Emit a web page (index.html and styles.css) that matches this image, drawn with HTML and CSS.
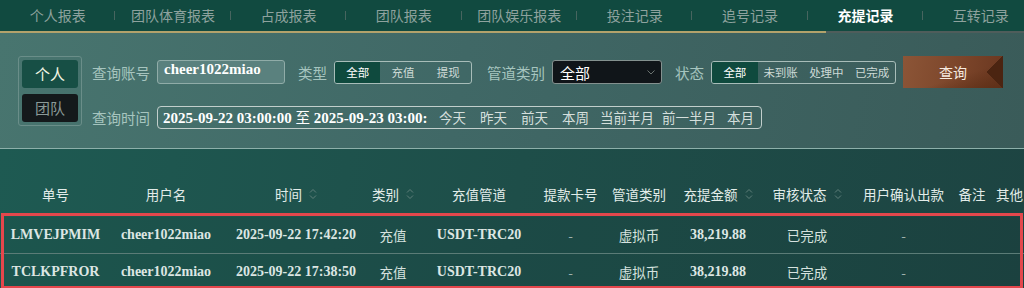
FILE: index.html
```html
<!DOCTYPE html>
<html lang="zh-CN">
  <head>
    <meta charset="UTF-8" />
    <title>充提记录</title>
    <link rel="stylesheet" href="styles.css">
  </head>
  <body>
    <div class="tabs">
      <span class="tab">个人报表</span>
      <span class="tab">团队体育报表</span>
      <span class="tab">占成报表</span>
      <span class="tab">团队报表</span>
      <span class="tab">团队娱乐报表</span>
      <span class="tab">投注记录</span>
      <span class="tab">追号记录</span>
      <span class="tab active">充提记录</span>
      <span class="tab">互转记录</span>
    </div>
    <div class="tab-line"></div>

    <div class="filters">
      <div class="who">
        <span class="who-btn on">个人</span>
        <span class="who-btn">团队</span>
      </div>
      <div class="form">
        <div class="form-row">
          <span class="label">查询账号</span>
          <div class="input">cheer1022miao</div>
          <span class="label spaced">类型</span>
          <div class="seg seg-3">
            <span class="on">全部</span>
            <span>充值</span>
            <span>提现</span>
          </div>
          <span class="label spaced-lg">管道类别</span>
          <div class="select">
            <span>全部</span>
            <svg width="8" height="5" viewBox="0 0 8 5"><polyline points="0.5,0.5 4,4 7.5,0.5" fill="none" stroke="#6b7370" stroke-width="1"/></svg>
          </div>
          <span class="label spaced">状态</span>
          <div class="seg seg-4">
            <span class="on">全部</span>
            <span>未到账</span>
            <span>处理中</span>
            <span>已完成</span>
          </div>
          <button class="search">查询</button>
        </div>
        <div class="form-row">
          <span class="label">查询时间</span>
          <div class="range">
            <div class="range-text">2025-09-22 03:00:00 <span class="to">至</span> 2025-09-23 03:00:00</div>
            <div class="quick">
              <span>今天</span>
              <span>昨天</span>
              <span>前天</span>
              <span>本周</span>
              <span class="wide">当前半月</span>
              <span class="wide">前一半月</span>
              <span>本月</span>
            </div>
          </div>
        </div>
      </div>
    </div>

    <div class="table">
      <div class="grid thead">
        <span>单号</span>
        <span>用户名</span>
        <span class="sort">时间<svg width="8" height="14" viewBox="0 0 8 14"><path d="M1 5.5L4 2.5L7 5.5M1 8.5L4 11.5L7 8.5" fill="none" stroke="#5f7f7a" stroke-width="1"/></svg></span>
        <span class="sort">类别<svg width="8" height="14" viewBox="0 0 8 14"><path d="M1 5.5L4 2.5L7 5.5M1 8.5L4 11.5L7 8.5" fill="none" stroke="#5f7f7a" stroke-width="1"/></svg></span>
        <span>充值管道</span>
        <span>提款卡号</span>
        <span>管道类别</span>
        <span class="sort">充提金额<svg width="8" height="14" viewBox="0 0 8 14"><path d="M1 5.5L4 2.5L7 5.5M1 8.5L4 11.5L7 8.5" fill="none" stroke="#5f7f7a" stroke-width="1"/></svg></span>
        <span class="sort">审核状态<svg width="8" height="14" viewBox="0 0 8 14"><path d="M1 5.5L4 2.5L7 5.5M1 8.5L4 11.5L7 8.5" fill="none" stroke="#5f7f7a" stroke-width="1"/></svg></span>
        <span>用户确认出款</span>
        <span>备注</span>
        <span>其他</span>
      </div>
      <div class="rows">
        <div class="grid row">
          <span class="b">LMVEJPMIM</span>
          <span class="b">cheer1022miao</span>
          <span class="b">2025-09-22 17:42:20</span>
          <span>充值</span>
          <span class="b">USDT-TRC20</span>
          <span class="dash">-</span>
          <span>虚拟币</span>
          <span class="b">38,219.88</span>
          <span>已完成</span>
          <span class="dash">-</span>
          <span></span>
          <span></span>
        </div>
        <div class="grid row">
          <span class="b">TCLKPFROR</span>
          <span class="b">cheer1022miao</span>
          <span class="b">2025-09-22 17:38:50</span>
          <span>充值</span>
          <span class="b">USDT-TRC20</span>
          <span class="dash">-</span>
          <span>虚拟币</span>
          <span class="b">38,219.88</span>
          <span>已完成</span>
          <span class="dash">-</span>
          <span></span>
          <span></span>
        </div>
      </div>
    </div>
  </body>
</html>
```

FILE: styles.css
```css
body {
  margin: 0;
  height: 288px;
  overflow: hidden;
  background-color: #1d4a46;
  font-family: 'Noto Sans CJK SC', sans-serif;
}

/* top tabs */
.tabs {
  display: flex;
  height: 31px;
  background-color: #114a40;
  overflow: hidden;
  white-space: nowrap;
}

.tab {
  flex: 0 0 115.4px;
  text-align: center;
  line-height: 31px;
  font-size: 14px;
  color: #8ea29e;
  background: linear-gradient(#47655f, #47655f) right center / 1px 9px no-repeat;
}

.tab.active {
  color: #ffffff;
  font-weight: bold;
}

.tab-line {
  height: 2px;
  background: linear-gradient(to right, #b3a26b 826px, #4f5d5b 826px);
}

/* filter panel */
.filters {
  display: flex;
  height: 116px;
  box-sizing: border-box;
  padding: 23px 0 0 18px;
  background: linear-gradient(100deg, #48756f 0%, #406866 45%, #3a5b59 100%);
  border-bottom: 1px solid #8db0aa;
}

.who {
  display: flex;
  flex-direction: column;
  gap: 6px;
  width: 64px;
  height: 70px;
  box-sizing: border-box;
  padding: 3px 3px;
  border: 1px solid #6a8e89;
  border-radius: 3px;
}

.who-btn {
  height: 28px;
  line-height: 28px;
  text-align: center;
  font-size: 15px;
  border-radius: 3px;
  background-color: #14191b;
  color: #8b9a97;
}

.who-btn.on {
  background-color: #174f45;
  color: #f3f6e4;
}

.form {
  display: flex;
  flex-direction: column;
  gap: 17px;
  margin-left: 10px;
}

.form-row {
  display: flex;
  align-items: center;
  gap: 7px;
  height: 32px;
}

.form-row + .form-row {
  height: 24px;
}

.label {
  font-size: 14.5px;
  color: #a6c5bf;
  white-space: nowrap;
}

.label.spaced {
  margin-left: 6px;
}

.label.spaced-lg {
  margin-left: 8px;
}

.input {
  width: 128px;
  height: 24px;
  box-sizing: border-box;
  padding-left: 6px;
  line-height: 22px;
  border: 1px solid #90aca8;
  border-radius: 3px;
  background-color: #5a817e;
  color: #ffffff;
  font: bold 15px 'Liberation Serif', serif;
}

.seg {
  display: flex;
  height: 23px;
  box-sizing: border-box;
  border: 1px solid #a8bdb9;
  border-radius: 3px;
  overflow: hidden;
}

.seg-3 {
  width: 138px;
}

.seg-4 {
  width: 185px;
}

.seg span {
  flex: 1;
  text-align: center;
  line-height: 21px;
  font-size: 11.5px;
  color: #cddad6;
}

.seg span.on {
  background-color: #0f4a3e;
  color: #ffffff;
}

.select {
  display: flex;
  align-items: center;
  justify-content: space-between;
  width: 110px;
  height: 24px;
  box-sizing: border-box;
  padding: 0 6px 0 7px;
  border: 1px solid #84918f;
  border-radius: 3px;
  background-color: #101519;
  color: #ffffff;
  font-size: 15px;
}

.search {
  width: 100px;
  height: 32px;
  border: none;
  padding: 0;
  font-family: 'Noto Sans CJK SC', sans-serif;
  font-size: 14px;
  color: #f6ebe0;
  background:
    linear-gradient(to bottom right, transparent 50%, #4b2411 50%) right top / 16px 16px no-repeat,
    linear-gradient(to top right, transparent 50%, #4b2411 50%) right bottom / 16px 16px no-repeat,
    linear-gradient(to top left, #5e2f17 0, transparent 40%),
    linear-gradient(100deg, #8c5537 0%, #7a4429 60%, #6a3720 100%);
}

.range {
  display: flex;
  align-items: center;
  height: 23px;
  box-sizing: border-box;
  border: 1px solid #c2cfcc;
  border-radius: 4px;
}

.range-text {
  width: 269px;
  box-sizing: border-box;
  padding-left: 5px;
  overflow: hidden;
  white-space: nowrap;
  line-height: 21px;
  color: #ffffff;
  font: bold 15px/21px 'Liberation Serif', serif;
}

.range-text .to {
  font-family: 'Noto Sans CJK SC', sans-serif;
  font-weight: normal;
  font-size: 14.5px;
}

.quick {
  display: flex;
  margin-left: 5px;
}

.quick span {
  width: 41px;
  text-align: center;
  font-size: 13.5px;
  color: #d5dfdc;
  white-space: nowrap;
}

.quick span.wide {
  width: 62px;
}

/* table */
.table {
  padding-top: 27px;
  background: linear-gradient(100deg, #1e5a52 0%, #1e4e49 50%, #1d4442 100%);
}

.grid {
  display: grid;
  grid-template-columns: 111px 110px 150px 44px 128px 55px 82px 76px 102px 91px 46px 29px;
  align-items: center;
}

.grid span {
  text-align: center;
  white-space: nowrap;
  line-height: 20px;
}

.thead {
  height: 36px;
  font-size: 13.5px;
  color: #e2ece9;
}

.thead .sort {
  display: flex;
  align-items: center;
  justify-content: center;
  gap: 7px;
}

.rows {
  padding-top: 5px;
  outline: 3px solid #e4474c;
  outline-offset: -4px;
}

.row {
  height: 36px;
  font-size: 13.5px;
  color: #d6e2df;
  background-color: rgba(0, 0, 0, 0.04);
}

.row + .row {
  border-top: 1px solid #5b7c77;
}

.row .b {
  font: bold 14px/20px 'Liberation Serif', serif;
  color: #dce6e3;
}

.row .dash {
  color: #9fb2ae;
}
```
